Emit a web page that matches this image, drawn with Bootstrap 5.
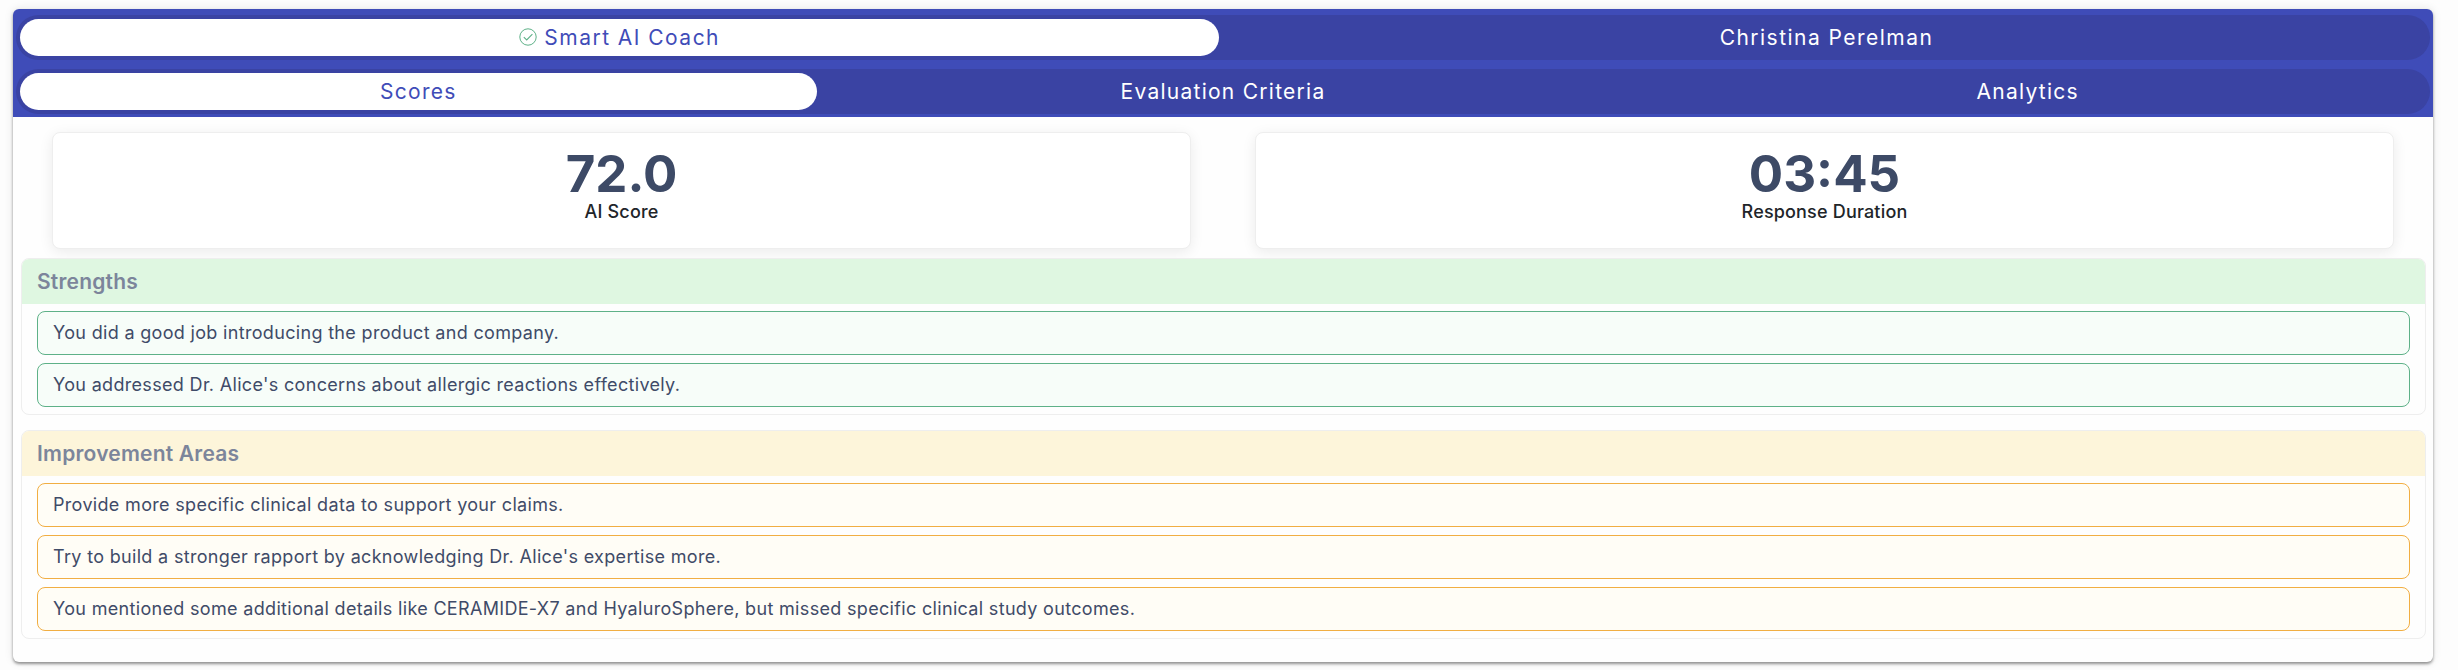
<!DOCTYPE html>
<html lang="en">
<head>
<meta charset="utf-8">
<meta name="viewport" content="width=device-width, initial-scale=1">
<title>Smart AI Coach</title>
<link href="https://cdn.jsdelivr.net/npm/bootstrap@5.3.0/dist/css/bootstrap.min.css" rel="stylesheet">
<style>
  body { font-family: Inter, "Liberation Sans", sans-serif; background: #fdfdfd; color: #212529; }
  .page-wrap { padding: 9px 25px 8px 13px; }
  .panel { background: #fefefe; border-radius: 6px; box-shadow: 0 2px 3px rgba(0,0,0,.4), 0 0 10px rgba(0,0,0,.1); padding-bottom: 23px; }
  .panel-head { background: #3f4cb8; border-radius: 6px 6px 0 0; padding: 6px 3px 3px; gap: 9px; }
  .tab-track { background: #3a43a3; border-radius: 23px; padding: 4px; gap: 8px; font-size: 21px; letter-spacing: .06em; }
  .tab-track.main-tabs { letter-spacing: .07em; }
  .tab-pill { flex: 1 1 0; height: 37px; border: 0; border-radius: 19px; background: transparent; color: #fff; font-size: inherit; line-height: 37px; letter-spacing: inherit; padding: 0; }
  .tab-pill.active { background: #fff; color: #3f4cb8; }
  .tab-pill svg { margin-top: -4px; }
  .scores { padding: 15px 39px 9px; gap: 64px; }
  .score-box { flex: 1 1 0; height: 117px; background: #fff; border: 1px solid #eee; border-radius: 8px; box-shadow: 0 3px 14px rgba(0,0,0,.08); padding-top: 9px; }
  .score-num { font-size: 51px; line-height: 63px; font-weight: 700; color: #3d4a66; }
  .score-label { font-size: 18px; line-height: 14px; font-weight: 500; letter-spacing: .01em; }
  .sections { padding: 0 7px 0 8px; gap: 15px; }
  .section-box { border: 1px solid #eee; border-radius: 8px; overflow: hidden; }
  .section-title { font-size: 21px; line-height: 46px; height: 45px; font-weight: 600; letter-spacing: .01em; color: #7c859b; padding: 0 15px; margin: 0; }
  .good .section-title { background: #dff7e1; }
  .improve .section-title { background: #fdf5da; }
  .notes { padding: 7px 15px; gap: 8px; margin: 0; }
  .note { border: 1px solid; border-radius: 8px; font-size: 18px; line-height: 42px; padding: 0 15px; letter-spacing: .018em; }
  .note span { color: #3f4b68; }
  .good .note { border-color: #5eb188; background: #f7fdf9; }
  .improve .note { border-color: #f1ae43; background: #fffdf6; }
</style>
</head>
<body>
<main class="page-wrap">
  <div class="panel">
    <header class="panel-head d-flex flex-column">
      <nav class="tab-track main-tabs d-flex" aria-label="Participants">
        <button type="button" class="tab-pill active"><svg width="18" height="18" viewBox="0 0 18 18" fill="none" stroke="#5eb188" aria-hidden="true"><circle cx="9" cy="9" r="8.2"/><path d="M4.8 9.2l2.9 2.8 5.7-5.8" stroke-width="1.1"/></svg> Smart AI Coach</button>
        <button type="button" class="tab-pill">Christina Perelman</button>
      </nav>
      <nav class="tab-track d-flex" aria-label="Views">
        <button type="button" class="tab-pill active">Scores</button>
        <button type="button" class="tab-pill">Evaluation Criteria</button>
        <button type="button" class="tab-pill">Analytics</button>
      </nav>
    </header>
    <div class="scores d-flex text-center">
      <div class="score-box"><div class="score-num">72.0</div><div class="score-label">AI Score</div></div>
      <div class="score-box"><div class="score-num">03:45</div><div class="score-label">Response Duration</div></div>
    </div>
    <div class="sections d-flex flex-column">
      <section class="section-box good">
        <h2 class="section-title">Strengths</h2>
        <ul class="notes list-unstyled d-flex flex-column">
          <li class="note"><span>You did a good job introducing the product and company.</span></li>
          <li class="note"><span>You addressed Dr. Alice's concerns about allergic reactions effectively.</span></li>
        </ul>
      </section>
      <section class="section-box improve">
        <h2 class="section-title">Improvement Areas</h2>
        <ul class="notes list-unstyled d-flex flex-column">
          <li class="note"><span>Provide more specific clinical data to support your claims.</span></li>
          <li class="note"><span>Try to build a stronger rapport by acknowledging Dr. Alice's expertise more.</span></li>
          <li class="note"><span>You mentioned some additional details like CERAMIDE-X7 and HyaluroSphere, but missed specific clinical study outcomes.</span></li>
        </ul>
      </section>
    </div>
  </div>
</main>
<script src="https://cdn.jsdelivr.net/npm/bootstrap@5.3.0/dist/js/bootstrap.bundle.min.js"></script>
</body>
</html>
